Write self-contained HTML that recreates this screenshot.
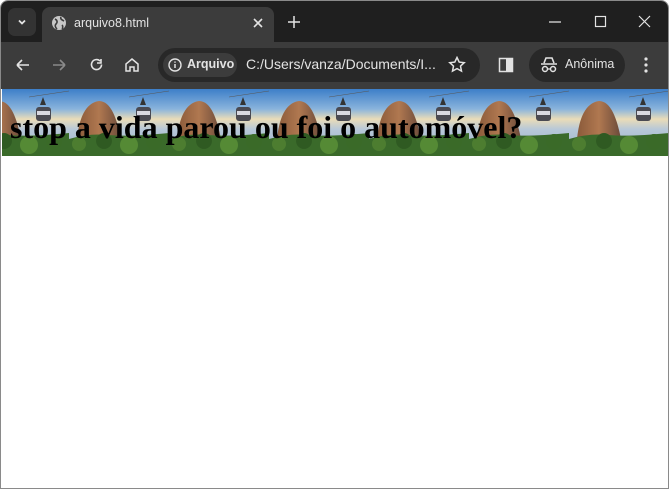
<!DOCTYPE html>
<html><head><style>
body{margin:0;width:669px;height:489px;overflow:hidden;font-family:"Liberation Sans",sans-serif;background:#fff;position:relative}
.frame{position:absolute;left:0;top:0;width:667px;height:487px;border:1px solid #8a8a8a;border-radius:8px 8px 0 0;overflow:hidden}
.tabbar{position:absolute;left:0;top:0;width:669px;height:41px;background:#1f1f1f}
.toolbar{position:absolute;left:0;top:41px;width:669px;height:47px;background:#3c3c3c}
.tab{position:absolute;left:41px;top:6px;width:232px;height:35px;background:#3c3c3c;border-radius:8px 8px 0 0;color:#e3e3e3;font-size:12.5px}
.ic{position:absolute;color:#e3e3e3}
.omni{position:absolute;left:157px;top:47px;width:322px;height:34px;background:#282828;border-radius:17px}
.chip{position:absolute;left:162px;top:52px;width:74px;height:24px;background:#3c3c3c;border-radius:12px}
.anon{position:absolute;left:528px;top:47px;width:96px;height:34px;background:#282828;border-radius:17px}
.page{position:absolute;left:1px;top:88px;width:667px;height:67px}
h1{position:absolute;left:9px;top:108px;margin:0;font:bold 32px "Liberation Serif",serif;color:#000;white-space:nowrap;letter-spacing:0px}
</style></head><body>
<div class="frame">
<div class="tabbar"></div>
<div style="position:absolute;left:7px;top:7px;width:28px;height:28px;background:#333;border-radius:7px"></div>
<svg class="ic" style="left:15px;top:15px" width="12" height="12"><path d="M3 4.5l3 3 3-3" stroke="#e3e3e3" stroke-width="1.8" fill="none"/></svg>
<div class="tab">
<svg style="position:absolute;left:9px;top:8px" width="16" height="16"><circle cx="8" cy="8" r="7" fill="#c7c7c7"/><path d="M4 4c2 1 3 3 1 5s0 4 1 5M10 2c-1 2 1 3 3 4M11 10c1 1 1 3 0 4" stroke="#3c3c3c" stroke-width="1.6" fill="none"/></svg>
<span style="position:absolute;left:32px;top:9px">arquivo8.html</span>
<svg style="position:absolute;left:210px;top:10px" width="12" height="12"><path d="M2 2l8 8M10 2l-8 8" stroke="#e3e3e3" stroke-width="1.6"/></svg>
</div>
<svg class="ic" style="left:286px;top:14px" width="14" height="14"><path d="M7 1v12M1 7h12" stroke="#e3e3e3" stroke-width="1.5"/></svg>
<svg class="ic" style="left:545px;top:14px" width="110" height="14"><path d="M3 7h12" stroke="#e3e3e3" stroke-width="1.2"/><rect x="49.5" y="1.5" width="10" height="10" stroke="#e3e3e3" fill="none" stroke-width="1.2"/><path d="M93 1l11 11M104 1l-11 11" stroke="#e3e3e3" stroke-width="1.2"/></svg>
<div class="toolbar"></div>
<svg class="ic" style="left:14px;top:56px" width="130" height="16"><path d="M2 8h12M2 8l5-5M2 8l5 5" stroke="#e3e3e3" stroke-width="1.6" fill="none"/><path d="M38 8h12M50 8l-5-5M50 8l-5 5" stroke="#8a8a8a" stroke-width="1.6" fill="none"/><path d="M85 4a5 5 0 1 0 1.5 3.5M86 2v4h-4" stroke="#e3e3e3" stroke-width="1.6" fill="none"/><path d="M111 14V7l6-5 6 5v7h-4v-4h-4v4z" stroke="#e3e3e3" stroke-width="1.5" fill="none"/></svg>
<div class="omni"></div><div class="chip"></div>
<svg class="ic" style="left:167px;top:57px" width="14" height="14"><circle cx="7" cy="7" r="6" stroke="#e3e3e3" stroke-width="1.4" fill="none"/><path d="M7 6v4M7 3.5v1.2" stroke="#e3e3e3" stroke-width="1.5"/></svg>
<span style="position:absolute;left:186px;top:56px;color:#e3e3e3;font-size:12.5px;font-weight:bold">Arquivo</span>
<span style="position:absolute;left:245px;top:55px;color:#e3e3e3;font-size:14px">C:/Users/vanza/Documents/I...</span>
<svg class="ic" style="left:447px;top:55px" width="18" height="18"><path d="M9 1.5l2.2 4.6 5 .6-3.7 3.4 1 5L9 12.6 4.5 15.1l1-5L1.8 6.7l5-.6z" stroke="#e3e3e3" stroke-width="1.5" fill="none"/></svg>
<svg class="ic" style="left:497px;top:56px" width="16" height="16"><rect x="1.5" y="1.5" width="13" height="13" stroke="#e3e3e3" stroke-width="1.5" fill="none"/><rect x="8" y="2" width="6" height="12" fill="#e3e3e3"/></svg>
<div class="anon"></div>
<svg class="ic" style="left:539px;top:56px" width="18" height="16"><path d="M4 6l2-5h6l2 5M1 7h16" stroke="#e3e3e3" stroke-width="1.6" fill="none"/><circle cx="5" cy="12" r="2.5" stroke="#e3e3e3" stroke-width="1.5" fill="none"/><circle cx="13" cy="12" r="2.5" stroke="#e3e3e3" stroke-width="1.5" fill="none"/><path d="M7.5 12h3" stroke="#e3e3e3" stroke-width="1.3"/></svg>
<span style="position:absolute;left:564px;top:56px;color:#e3e3e3;font-size:12.5px">Anônima</span>
<svg class="ic" style="left:642px;top:55px" width="6" height="18"><circle cx="3" cy="3" r="1.6" fill="#e3e3e3"/><circle cx="3" cy="9" r="1.6" fill="#e3e3e3"/><circle cx="3" cy="15" r="1.6" fill="#e3e3e3"/></svg>
<svg class="page" width="667" height="67">
<defs>
<linearGradient id="sky" x1="0" y1="0" x2="0" y2="1"><stop offset="0" stop-color="#3d7fc8"/><stop offset="0.3" stop-color="#8ab4dc"/><stop offset="0.45" stop-color="#eadcb8"/><stop offset="0.6" stop-color="#b8c8d8"/><stop offset="1" stop-color="#9ab0c8"/></linearGradient>
<linearGradient id="mt" x1="0" y1="0" x2="1" y2="0"><stop offset="0" stop-color="#8a5a3a"/><stop offset="0.5" stop-color="#b07850"/><stop offset="1" stop-color="#6a4a3a"/></linearGradient>
<pattern id="t" x="-33" y="0" width="100" height="67" patternUnits="userSpaceOnUse">
<rect width="100" height="67" fill="url(#sky)"/>
<path d="M60 8L100 2" stroke="#555" stroke-width="0.6"/>
<path d="M8 50C10 30 16 14 30 12 42 12 48 30 52 50z" fill="url(#mt)"/>
<path d="M0 50Q20 44 40 46T100 44V67H0z" fill="#3a6a2a"/>
<circle cx="10" cy="55" r="7" fill="#4d7d30"/><circle cx="35" cy="52" r="8" fill="#2f5a22"/><circle cx="60" cy="56" r="9" fill="#558a35"/><circle cx="85" cy="53" r="8" fill="#3a6a28"/>
<path d="M74 8l-3 8h6z" fill="#333"/><rect x="67" y="18" width="15" height="14" rx="3" fill="#4a4a52"/><rect x="68" y="22" width="13" height="4" fill="#d8d8e0"/>
</pattern></defs>
<rect width="667" height="67" fill="url(#t)"/>
</svg>
<h1>stop a vida parou ou foi o automóvel?</h1>
</div>
</body></html>
